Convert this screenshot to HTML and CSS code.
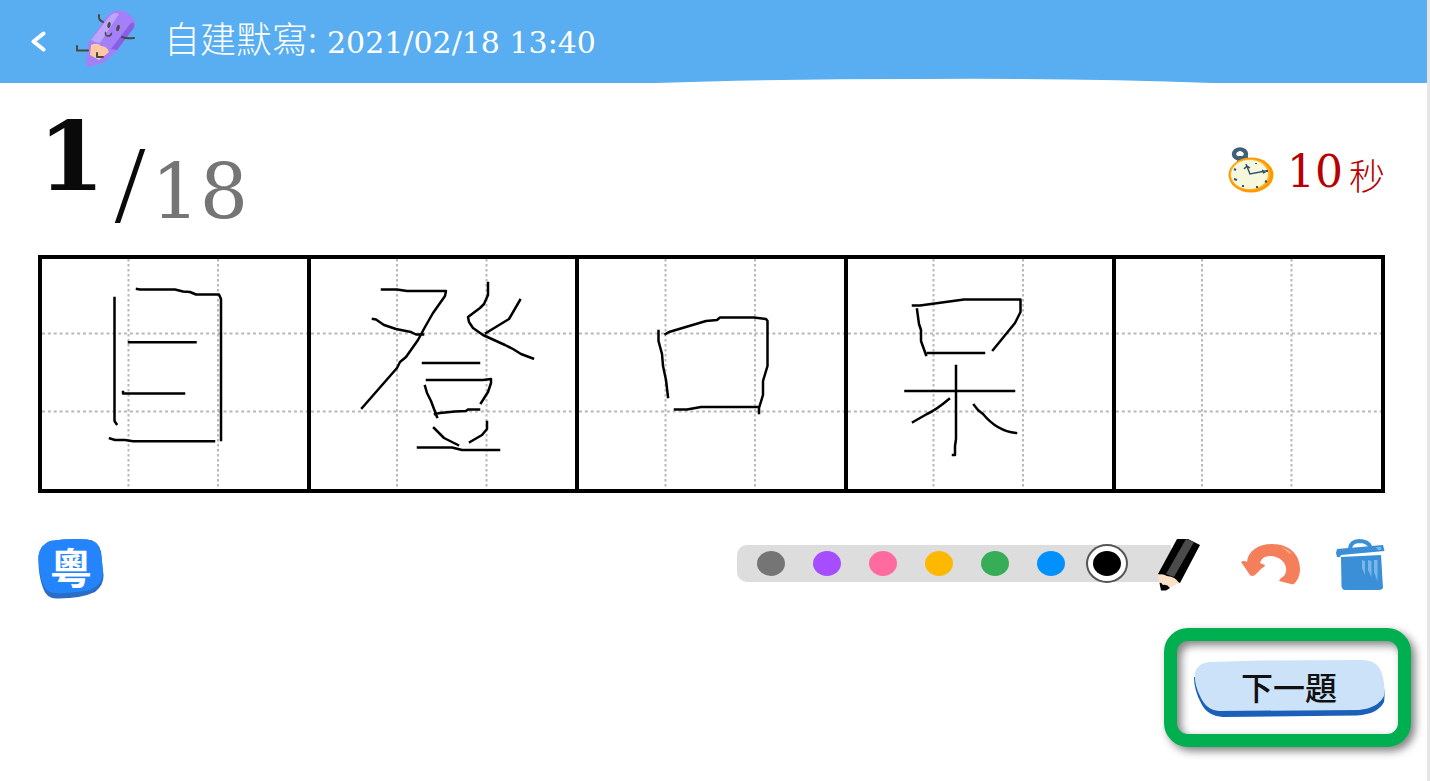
FILE: index.html
```html
<!DOCTYPE html>
<html lang="zh-Hant">
<head>
<meta charset="utf-8">
<meta name="viewport" content="width=device-width, initial-scale=1">
<title>自建默寫</title>
<link rel="stylesheet" href="styles.css">
</head>
<body>
<header class="topbar">
  <button class="icon-button back" type="button" aria-label="返回">
    <svg width="16" height="22" viewBox="0 0 16 22"><path d="M13.500 2.500 3.500 10.500 13.500 18.500" fill="none" stroke="#fff" stroke-width="4" stroke-linecap="round" stroke-linejoin="round"/></svg>
  </button>
  <svg class="mascot" width="62" height="60" viewBox="74 8 62 60" aria-hidden="true">
    <path d="M88 43 107 16Q116 7 126 12L131 16Q138 22 133 29L117 51 105 62 90 67Q86 67 86 62Z" fill="#a480f8"/>
    <path d="M91 40 109 17Q114 11 119 14L100 43 95 42Z" fill="#bda5fb"/>
    <path d="M133 22Q136 25 133 29L117 50 111 49 130 24Z" fill="#865fe3"/>
    <path d="M91 45Q98 42 101 46 107 46 109 52L99 60 90 55Z" fill="#fcc9a4"/>
    <g fill="none" stroke="#4b4840" stroke-width="2" stroke-linecap="round" stroke-linejoin="round">
      <path d="M99 15Q98 20 103 22M122 37Q127 39 134 38M77 46V50.500H88M97 53V57H103"/>
      <path d="M105.500 32.500Q105 36 108 36 111 36 111.500 33.500" stroke-width="1.500"/>
    </g>
    <g fill="#4b4840"><ellipse cx="109" cy="25" rx="1.600" ry="3" transform="rotate(15 109 25)"/><ellipse cx="118" cy="28" rx="1.600" ry="3.200" transform="rotate(15 118 28)"/></g>
  </svg>
  <h1 class="title"><span class="title-name">自建默寫:</span><time datetime="2021-02-18T13:40">2021/02/18 13:40</time></h1>
  <svg class="curve" viewBox="0 0 550 5" preserveAspectRatio="none" aria-hidden="true"><path d="M0 5Q120 1 265 1 420 0 550 5Z" fill="#fff"/></svg>
</header>

<main class="page">
  <section class="status">
    <p class="progress"><strong class="current">1</strong><span class="slash">/</span><span class="total">18</span></p>
    <p class="timer">
      <svg class="clock" width="48" height="48" viewBox="1227 145 48 48" aria-hidden="true">
        <ellipse cx="1240" cy="153" rx="6" ry="4.500" fill="none" stroke="#40607a" stroke-width="4.500"/>
        <path d="M1237 155H1248V161H1237Z" fill="#40607a"/>
        <ellipse cx="1240" cy="152.500" rx="2.500" ry="2.500" fill="#fff"/>
        <ellipse cx="1251" cy="174" rx="22.500" ry="17.500" fill="#f90"/>
        <ellipse cx="1250" cy="173.500" rx="20" ry="15.500" fill="#fbb72f"/>
        <ellipse cx="1249.500" cy="173.500" rx="18.500" ry="14.500" fill="#f5f8dc"/>
        <path d="M1246 163 1250 173 1268 169.500M1244 168 1247 165 1250 167M1262 169 1265 171 1263 172" fill="none" stroke="#34536b" stroke-width="1.500"/>
        <path d="M1256 162v1M1265 180l2 1M1257 185v2M1243 184v2M1234 178l3 1M1234 168l2 1M1266 170h2" stroke="#34536b" stroke-width="2"/>
      </svg>
      <span class="seconds">10</span><span class="unit">秒</span>
    </p>
  </section>

  <section class="board" aria-label="書寫格">
    <div class="cell"></div><div class="cell"></div><div class="cell"></div><div class="cell"></div><div class="cell"></div>
    <svg class="ink" viewBox="38 255 1347 238" preserveAspectRatio="none" aria-hidden="true">
      <g stroke="#b8b8b8" stroke-width="2" fill="none">
        <path stroke-dasharray="3 2.860" d="M42 333.500H307M311 333.500H575M579 333.500H844M848 333.500H1112M1116 333.500H1381M42 411.500H307M311 411.500H575M579 411.500H844M848 411.500H1112M1116 411.500H1381"/>
        <path stroke-dasharray="2.500 2.500" d="M128.500 259V489M218 259V489M397 259V489M486.500 259V489M665.500 259V489M755 259V489M933.500 259V489M1023 259V489M1202 259V489M1291.500 259V489"/>
      </g>
      <g stroke="#000" stroke-width="2.500" fill="none" stroke-linecap="square" stroke-linejoin="round">
        <path d="M114.500 298V421L116.500 424M137 289 140 289.500H175L183 291.500 190 292 196 294.500H219L221 299V440M129 342.300H195.500M123 392V393.500H184M110 438.500 115 440H125L133 441.300H214"/>
        <path d="M382 289.500H397L407 291H446L445 296 433 313 425 327 418 340 406 357 400 362 397 368 362 408M373 319 376 319.500 384 325 396 329 411 332 416 334.500H423"/>
        <path d="M488 283V295L484 304 480 308 468 317 469 322 473 328 483 335 505 345 513 349 521 354 533 358.500M520 300 509 319 486 333M423 363H479M427 380H483L491 379V383L488 392 481 403M425 386 427 393 431 401 434 409 437 417M435 414 440 413 455 411.500 466 411 468 409.500H479M434 428 444 438 458 445M487 422V429L482 435 470 442M418 447.500H452L462 450H499"/>
        <path d="M658.500 331V341L662 354 663 366 666 380 668 397M665.500 334 669 332 706 321 717 320 720 317.500H754L766 319 767.500 321V366L763 381V395L759 408V413M675 409.500H687L701 407H758"/>
        <path d="M913 305.500H920L964 299.500H1020.500V312L1015 323 993 350M917 309.500 919 324 921 330V341L926 355M928 353H984M905.500 391H1014M956 366V439L955 446V455H953M949 399Q936 410 927 414L913 422M974 405 978 410 983 414Q997 431 1016 433"/>
      </g>
    </svg>
  </section>

  <section class="tools">
    <button class="icon-button voice" type="button" aria-label="粵語">
      <svg width="66" height="60" viewBox="38 539 66 60" aria-hidden="true">
        <path d="M38.500 556Q40 545 50 541 70 538 87 539.500 98 540 101 552L103.500 575Q104 585 95 592 80 599 56 598.500 46 598 43 588Q38 575 38.500 556Z" fill="#2a6dc4"/>
        <path d="M38.500 556Q40 545 50 541 70 538 87 539.500 98 540 101 552L103 573Q102 585 90 590 72 594 54 593 44 592 41 578 38 567 38.500 556Z" fill="#2484fb"/>
      </svg>
      <span class="voice-text">粵</span>
    </button>
    <div class="drawing">
      <div class="palette" role="radiogroup" aria-label="筆色">
        <input class="swatch gray" type="radio" name="ink" aria-label="灰色">
        <input class="swatch purple" type="radio" name="ink" aria-label="紫色">
        <input class="swatch pink" type="radio" name="ink" aria-label="粉紅色">
        <input class="swatch yellow" type="radio" name="ink" aria-label="黃色">
        <input class="swatch green" type="radio" name="ink" aria-label="綠色">
        <input class="swatch blue" type="radio" name="ink" aria-label="藍色">
        <input class="swatch black" type="radio" name="ink" aria-label="黑色" checked>
      </div>
      <button class="icon-button pencil" type="button" aria-label="鉛筆">
        <svg width="44" height="52" viewBox="1158 539 44 52">
          <path d="M1178 539H1189L1201 545 1181 583 1159 574Z" fill="#000"/>
          <path d="M1187 539 1195 542 1175 577 1167 574Z" fill="#4b4b4b"/>
          <path d="M1159 575Q1163 573 1168 576 1177 577 1180 583L1170 588 1160 583Z" fill="#fde1c6"/>
          <path d="M1160.500 583Q1162 582 1164 585 1168 584 1171 588L1167 590.500H1162Z" fill="#000"/>
        </svg>
      </button>
      <button class="icon-button undo" type="button" aria-label="復原">
        <svg width="60" height="42" viewBox="1241 545 60 42">
          <path d="M1241 563Q1244 561 1247 563C1248 552 1258 545 1272 545 1290 545 1300 556 1300 570 1300 577 1297 583 1293 585.500L1279 582Q1280 579 1284 577C1290 569 1283 557 1270 557Q1262 557 1260 564L1265 566Q1265 568 1262 569L1255 576Q1252 578 1250 576Z" fill="#f57f5b"/>
          <path d="M1281 548Q1288 550 1292 555L1289 554Q1286 551 1281 548Z" fill="#fbb69f"/>
        </svg>
      </button>
      <button class="icon-button trash" type="button" aria-label="清除">
        <svg width="49" height="52" viewBox="1336 539 49 52">
          <path d="M1350 548Q1351 541.500 1359 541 1368 541 1370.500 547" fill="none" stroke="#3b8fd6" stroke-width="4"/>
          <path d="M1337 549 1383 545 1384.500 551 1341 555 1340 557H1337L1336 553Z" fill="#3b8fd6"/>
          <path d="M1341 557 1381 555 1383 588Q1382 590 1379 590H1345Q1342 590 1341.500 586Z" fill="#3b8fd6"/>
          <path d="M1362 560V568L1365 575V561ZM1368 560V570L1371.500 577V561ZM1374 560V572L1377.500 581V560ZM1376 547H1381V550H1378Z" fill="#77b8ea"/>
        </svg>
      </button>
    </div>
  </section>

  <div class="actions">
    <div class="callout">
      <button class="icon-button next" type="button">
        <svg width="192" height="58" viewBox="1193 660 192 58" aria-hidden="true">
          <path d="M1194 677Q1194 690 1201 703 1207 716 1223 717L1357 715.500Q1378 714 1384 702 1386 690 1381 677Z" fill="#1b5fb8"/>
          <path d="M1195 673Q1197 663 1210 662L1260 660.500 1362 660Q1375 660 1380 669 1386 683 1384 696 1378 708 1359 710L1219 711Q1206 710 1200 696 1194 684 1195 673Z" fill="#cce2f9"/>
        </svg>
        <span class="next-text">下一題</span>
      </button>
    </div>
  </div>
</main>
</body>
</html>
```
FILE: styles.css
```css
* {
  box-sizing: border-box;
}

body {
  margin: 0;
  min-height: 100vh;
  border-right: 3px solid #e6e6e6;
  background: #fff;
  color: #0a0a0a;
  font-family: "DejaVu Serif", "Noto Sans CJK TC", serif;
}

h1,
p {
  margin: 0;
  font-weight: 400;
}

svg {
  display: block;
}

.icon-button {
  padding: 0;
  border: 0;
  background: none;
  color: inherit;
  cursor: pointer;
}

.topbar {
  position: relative;
  display: flex;
  align-items: center;
  height: 83px;
  padding: 0 30px;
  background: #58aef1;
  color: #fff;
}

.mascot {
  margin: 0 28px 8px 28px;
}

.title {
  display: flex;
  align-items: baseline;
  gap: 10px;
  padding-bottom: 4px;
  font-size: 30px;
  line-height: 48px;
}

.title-name {
  font-family: "Noto Sans CJK TC", sans-serif;
  font-size: 36px;
  font-weight: 300;
}

.curve {
  position: absolute;
  bottom: 0;
  left: 46%;
  width: 39%;
  height: 5px;
}

.page {
  padding: 0 42px 30px 38px;
}

.status {
  display: flex;
  justify-content: space-between;
  align-items: flex-start;
  height: 172px;
  padding-top: 25px;
}

.progress {
  display: flex;
  align-items: flex-start;
}

.current {
  font-size: 96px;
  line-height: 98px;
}

.slash {
  margin: 22px 0 0 10px;
  font-family: "Liberation Serif", serif;
  font-size: 110px;
  line-height: 110px;
}

.total {
  margin: 46px 0 0 6px;
  color: #757575;
  font-size: 76px;
  line-height: 76px;
}

.timer {
  display: flex;
  align-items: center;
  padding-top: 36px;
  color: #b80000;
}

.clock {
  margin-bottom: 4px;
}

.seconds {
  margin-left: 12px;
  font-size: 44px;
  line-height: 52px;
}

.unit {
  margin: 4px 0 0 6px;
  font-family: "Noto Sans CJK TC", sans-serif;
  font-size: 36px;
  font-weight: 300;
  line-height: 52px;
}

.board {
  position: relative;
  display: grid;
  grid-template-columns: repeat(5, 1fr);
  gap: 4px;
  height: 238px;
  border: 4px solid #000;
  background: #000;
}

.cell {
  background: #fff;
}

.ink {
  position: absolute;
  inset: -4px;
  width: calc(100% + 8px);
  height: calc(100% + 8px);
}

.tools {
  display: flex;
  justify-content: space-between;
  align-items: flex-start;
  padding-top: 46px;
}

.voice,
.next {
  display: grid;
  place-items: center;
}

.voice > *,
.next > * {
  grid-area: 1 / 1;
}

.voice-text {
  padding-bottom: 6px;
  color: #fff;
  font: 700 42px/48px "Noto Sans CJK TC", sans-serif;
}

.drawing {
  display: flex;
  align-items: center;
}

.palette {
  display: flex;
  align-items: center;
  gap: 28px;
  height: 37px;
  margin-bottom: 4px;
  padding: 0 50px 0 20px;
  border-radius: 10px 0 0 10px;
  background: #ddd;
}

.swatch {
  appearance: none;
  width: 28px;
  height: 25px;
  margin: 0;
  border-radius: 50%;
  cursor: pointer;
}

.swatch:checked {
  box-shadow: 0 0 0 5px #fff, 0 0 0 7px #555;
}

.gray { background: #757575; }
.purple { background: #a64dff; }
.pink { background: #ff6b9e; }
.yellow { background: #ffb800; }
.green { background: #37ad58; }
.blue { background: #0091ff; }
.black { background: #000; }

.pencil {
  margin-left: -14px;
}

.undo {
  margin-left: 40px;
}

.trash {
  margin-left: 35px;
}

.actions {
  display: flex;
  justify-content: flex-end;
  padding-top: 61px;
}

.callout {
  position: relative;
}

.callout::after {
  content: "";
  position: absolute;
  inset: -32px -26px -29px -29px;
  border: 13px solid #00b050;
  border-radius: 24px;
  filter: drop-shadow(4px 4px 4px rgba(0, 0, 0, 0.5));
  pointer-events: none;
}

.next-text {
  padding-bottom: 6px;
  color: #111;
  font: 500 32px/48px "Noto Sans CJK TC", sans-serif;
}
```
